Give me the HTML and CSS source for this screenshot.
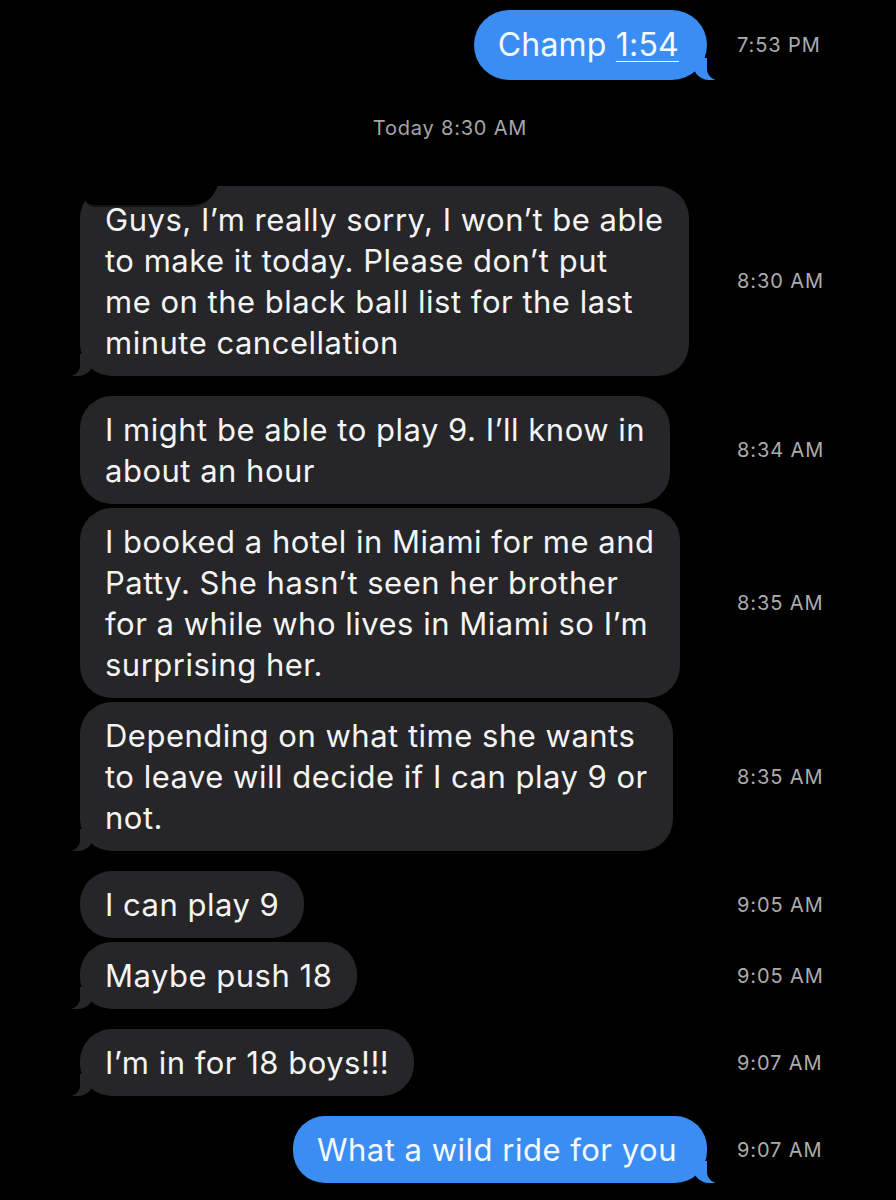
FILE: index.html
```html
<!DOCTYPE html>
<html lang="en">
<head>
<meta charset="utf-8">
<title>Messages</title>
<link rel="stylesheet" href="styles.css">
</head>
<body>
<main class="thread">
  <div class="row sent-row first">
    <div class="bubble sent big tail">Champ <span class="link">1:54</span></div>
    <div class="time">7:53 PM</div>
  </div>

  <div class="day">Today 8:30 AM</div>

  <div class="row">
    <div class="bubble recv tail">
      <span class="redact"></span>
      Guys, I’m really sorry, I won’t be able<br>to make it today. Please don’t put<br>me on the black ball list for the last<br>minute cancellation
    </div>
    <div class="time">8:30 AM</div>
  </div>

  <div class="row gap-lg">
    <div class="bubble recv">I might be able to play 9. I’ll know in<br>about an hour</div>
    <div class="time">8:34 AM</div>
  </div>

  <div class="row gap-sm">
    <div class="bubble recv">I booked a hotel in Miami for me and<br>Patty. She hasn’t seen her brother<br>for a while who lives in Miami so I’m<br>surprising her.</div>
    <div class="time">8:35 AM</div>
  </div>

  <div class="row gap-sm">
    <div class="bubble recv tail">Depending on what time she wants<br>to leave will decide if I can play 9 or<br>not.</div>
    <div class="time">8:35 AM</div>
  </div>

  <div class="row gap-lg">
    <div class="bubble recv">I can play 9</div>
    <div class="time">9:05 AM</div>
  </div>

  <div class="row gap-sm">
    <div class="bubble recv tail">Maybe push 18</div>
    <div class="time">9:05 AM</div>
  </div>

  <div class="row gap-lg">
    <div class="bubble recv tail">I’m in for 18 boys!!!</div>
    <div class="time">9:07 AM</div>
  </div>

  <div class="row sent-row gap-lg">
    <div class="bubble sent tail">What a wild ride for you</div>
    <div class="time">9:07 AM</div>
  </div>
</main>
</body>
</html>
```

FILE: styles.css
```css
html, body {
  margin: 0;
  padding: 0;
  background: #000;
}

body {
  width: 896px;
  height: 1200px;
  overflow: hidden;
  font-family: Inter, "Liberation Sans", Arial, sans-serif;
}

.thread {
  padding: 10px 0 0 80px;
  display: flex;
  flex-direction: column;
}

.row {
  display: grid;
  grid-template-columns: 627px 1fr;
  column-gap: 30px;
  align-items: center;
}

.gap-sm { margin-top: 4px; }
.gap-lg { margin-top: 20px; }

.bubble {
  position: relative;
  justify-self: start;
  box-sizing: border-box;
  padding: 13px 25px 13px 25px;
  border-radius: 32px;
  font-size: 31px;
  line-height: 41px;
  letter-spacing: 0.5px;
  color: #f4f4f4;
  white-space: nowrap;
}

.recv {
  background: #262629;
}

.sent {
  justify-self: end;
  background: #3a8ef3;
  padding: 13px 30px 13px 24px;
  color: #f6f9ff;
}

.sent.big {
  font-size: 32px;
  letter-spacing: 0.2px;
  padding: 14px 28px 15px 24px;
  border-radius: 35px;
}

.link {
  text-decoration: underline;
  text-decoration-thickness: 1px;
  text-underline-offset: 5px;
}

/* tails */
.recv.tail::before {
  content: "";
  position: absolute;
  bottom: 0;
  left: -8px;
  width: 22px;
  height: 22px;
  background: #262629;
  border-bottom-right-radius: 16px;
}
.recv.tail::after {
  content: "";
  position: absolute;
  bottom: 0;
  left: -12px;
  width: 12px;
  height: 22px;
  background: #000;
  border-bottom-right-radius: 11px;
}

.sent.tail::before {
  content: "";
  position: absolute;
  bottom: 0;
  right: -8px;
  width: 22px;
  height: 22px;
  background: #3a8ef3;
  border-bottom-left-radius: 16px;
}
.sent.tail::after {
  content: "";
  position: absolute;
  bottom: 0;
  right: -12px;
  width: 12px;
  height: 22px;
  background: #000;
  border-bottom-left-radius: 11px;
}

.redact {
  position: absolute;
  left: 3px;
  top: -38px;
  width: 136px;
  height: 59px;
  background: #000;
  border-radius: 0 0 30px 14px;
  box-shadow: inset 0 -14px 0 -12px #141414;
}

.time {
  font-size: 20px;
  letter-spacing: 0.9px;
  color: #acacac;
  font-weight: 400;
}

.day {
  margin: 36px 0 46px -80px;
  text-align: center;
  width: 900px;
  height: 24px;
  line-height: 24px;
  font-size: 20px;
  letter-spacing: 0.8px;
  color: #a6a6a6;
}
```
